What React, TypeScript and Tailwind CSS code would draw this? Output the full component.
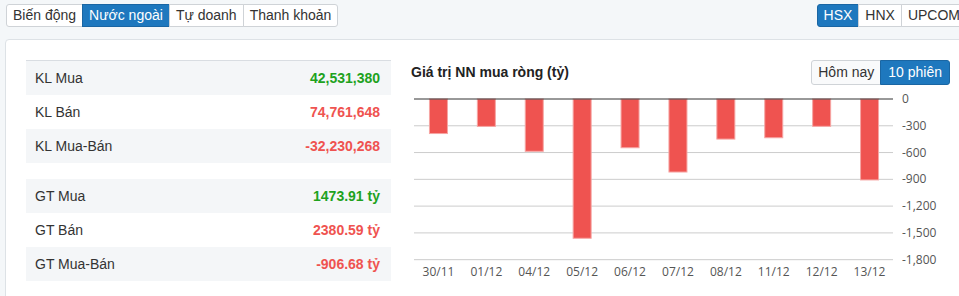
import React from 'react';

const mainTabs = ['Biến động', 'Nước ngoài', 'Tự doanh', 'Thanh khoản'];
const exchanges = ['HSX', 'HNX', 'UPCOM'];

const volRows = [
  { label: 'KL Mua', value: '42,531,380', color: 'text-[#1ea21e]' },
  { label: 'KL Bán', value: '74,761,648', color: 'text-[#ef5350]' },
  { label: 'KL Mua-Bán', value: '-32,230,268', color: 'text-[#ef5350]' },
];

const valRows = [
  { label: 'GT Mua', value: '1473.91 tỷ', color: 'text-[#1ea21e]' },
  { label: 'GT Bán', value: '2380.59 tỷ', color: 'text-[#ef5350]' },
  { label: 'GT Mua-Bán', value: '-906.68 tỷ', color: 'text-[#ef5350]' },
];

const sessions = [
  { d: '30/11', v: -387 },
  { d: '01/12', v: -307 },
  { d: '04/12', v: -586 },
  { d: '05/12', v: -1560 },
  { d: '06/12', v: -546 },
  { d: '07/12', v: -818 },
  { d: '08/12', v: -449 },
  { d: '11/12', v: -434 },
  { d: '12/12', v: -306 },
  { d: '13/12', v: -906.68 },
];

const Table = ({ rows, first }: { rows: typeof volRows; first?: boolean }) => (
  <div className={first ? 'border-t border-[#d9dde2]' : ''}>
    {rows.map((r, i) => (
      <div
        key={r.label}
        className={`flex h-[34px] items-center justify-between pl-[9px] pr-[11px] ${i % 2 === 0 ? 'bg-[#f4f6f8]' : 'bg-white'}`}
      >
        <span className="text-[14px] text-[#333]">{r.label}</span>
        <span className={`text-[14px] font-bold ${r.color}`}>{r.value}</span>
      </div>
    ))}
  </div>
);

const Chart = () => {
  const x0 = 3;
  const cat = 47.9;
  const zero = 14;
  const step = 26.78;
  const scale = step / 300;
  const ticks = [0, -300, -600, -900, -1200, -1500, -1800];
  const gridEnd = 482;
  return (
    <svg width="539" height="211" className="block" style={{ fontFamily: '"Open Sans", sans-serif' }}>
      {ticks.map((t, i) => (
        <g key={t}>
          {i > 0 && <line x1={x0} x2={gridEnd} y1={zero + i * step} y2={zero + i * step} stroke="#cccccc" strokeWidth="1" />}
          <text x="491" y={zero + i * step + 4} fontSize="12" fill="#555">
            {t === 0 ? '0' : t.toLocaleString('en-US')}
          </text>
        </g>
      ))}
      {sessions.map((s, i) => {
        const h = -s.v * scale;
        const bx = x0 + i * cat + (cat - 18) / 2 + 0.5;
        return (
          <g key={s.d}>
            <rect x={bx} y={zero} width="18" height={h} fill="#ef5350" stroke="#f6a5a3" strokeWidth="1" />
            <text x={x0 + i * cat + cat / 2 + 0.5} y="191" fontSize="12" fill="#555" textAnchor="middle">
              {s.d}
            </text>
          </g>
        );
      })}
      <line x1={x0} x2={gridEnd} y1={zero} y2={zero} stroke="#333" strokeWidth="1" />
    </svg>
  );
};

export default function App() {
  return (
    <div className="w-[959px] h-[296px] overflow-hidden bg-[#f4f7f9]" style={{ fontFamily: '"Liberation Sans", Arial, sans-serif' }}>
      <div className="w-[975px] pl-[5px] pr-[8px] pt-[4px]">
        <div className="flex items-center justify-between pl-[1px]">
          <div className="flex">
            {mainTabs.map((t, i) => (
              <div
                key={t}
                className={`h-[23px] px-[6px] flex items-center text-[14px] border ${
                  i === 1 ? 'bg-[#1e78be] border-[#1a66a3] text-white' : 'bg-white border-[#cfd3d7] text-[#333]'
                } ${i === 0 ? 'rounded-l-[3px]' : '-ml-px'} ${i === mainTabs.length - 1 ? 'rounded-r-[3px]' : ''}`}
              >
                {t}
              </div>
            ))}
          </div>
          <div className="flex">
            {exchanges.map((t, i) => (
              <div
                key={t}
                className={`h-[23px] px-[6px] flex items-center text-[14px] border ${
                  i === 0 ? 'bg-[#1e78be] border-[#1a66a3] text-white rounded-l-[3px]' : 'bg-white border-[#cfd3d7] text-[#333] -ml-px'
                } ${i === exchanges.length - 1 ? 'rounded-r-[3px]' : ''}`}
              >
                {t}
              </div>
            ))}
          </div>
        </div>

        <div className="mt-[12px] h-[280px] rounded-[4px] border border-[#dde2e6] bg-white pt-[20px] pl-[20px] pr-[16px] flex gap-[20px]">
          <div className="w-[365px] shrink-0 flex flex-col gap-[16px]">
            <Table rows={volRows} first />
            <Table rows={valRows} />
          </div>
          <div className="w-[539px] shrink-0 flex flex-col">
            <div className="flex h-[25px] items-center justify-between">
              <span className="text-[14px] font-bold text-[#222]">Giá trị NN mua ròng (tỷ)</span>
              <div className="flex h-[25px]">
                <div className="flex items-center px-[6px] text-[14px] text-[#333] bg-[#f9fafb] border border-[#cfd3d7] rounded-l-[3px]">Hôm nay</div>
                <div className="-ml-px flex items-center px-[7px] text-[14px] text-white bg-[#1e78be] border border-[#1a66a3] rounded-r-[3px]">10 phiên</div>
              </div>
            </div>
            <Chart />
          </div>
        </div>
      </div>
    </div>
  );
}
